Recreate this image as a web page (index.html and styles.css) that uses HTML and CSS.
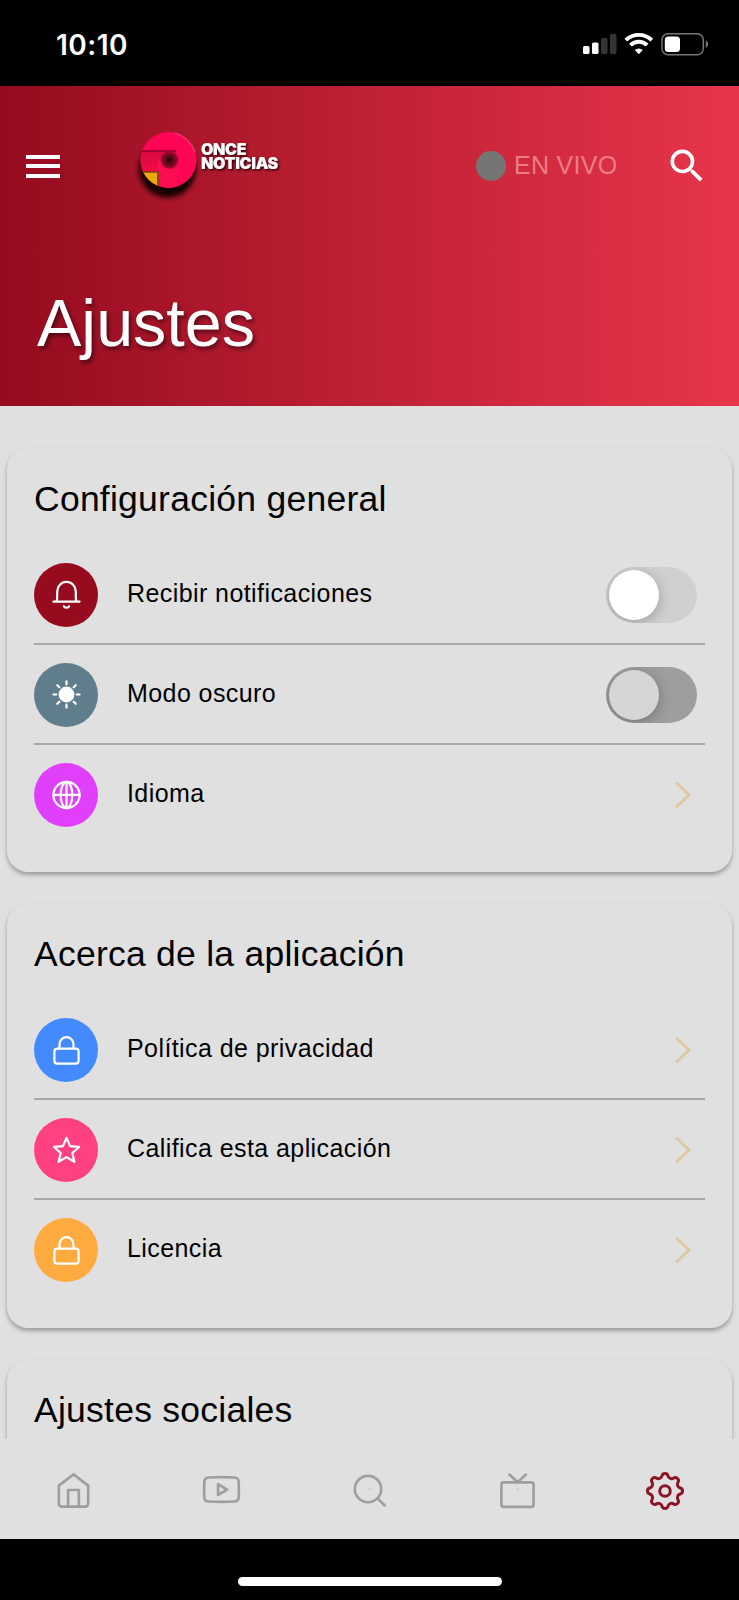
FILE: index.html
```html
<!DOCTYPE html>
<html lang="es">
<head>
  <meta charset="UTF-8" />
  <meta name="viewport" content="width=device-width, initial-scale=1.0"/>
  <title>Once Noticias - Ajustes</title>
  <link rel="stylesheet" href="styles.css">
</head>
<body>
  <!-- Barra de estado -->
  <div class="status-bar">
    <span class="time">10:10</span>
    <svg class="status-icons" width="128" height="24" viewBox="0 0 128 24">
      <g fill="#fff">
        <rect x="1" y="14" width="6.5" height="8" rx="1.5"/>
        <rect x="10" y="10.5" width="6.5" height="11.5" rx="1.5"/>
        <g fill="#343434">
          <rect x="19" y="6" width="6.5" height="16" rx="1.5"/>
          <rect x="28" y="2" width="6.5" height="20" rx="1.5"/>
        </g>
      </g>
      <g fill="none" stroke="#fff" stroke-width="3.9">
        <path d="M43.8 8.2a18.6 18.6 0 0 1 26 0"/>
        <path d="M48.5 13.1a12 12 0 0 1 16.6 0"/>
      </g>
      <path d="M56.8 22.2l-4-4.1a5.8 5.8 0 0 1 8 0z" fill="#fff"/>
      <rect x="80" y="1.7" width="41.3" height="21" rx="6" fill="none" stroke="#777" stroke-width="1.5"/>
      <rect x="82.800" y="4.500" width="15.2" height="15.5" rx="3.5" fill="#fff"/>
      <path d="M123.800 8.5c3 1.2 3 6 0 7.4z" fill="#777"/>
    </svg>
  </div>

  <!-- Encabezado -->
  <header class="header">
    <div class="topbar">
      <button class="icon-btn menu" aria-label="Menú"><span></span><span></span><span></span></button>
      <svg class="logo" width="160" height="90" viewBox="0 0 160 90">
        <defs>
          <filter id="soft" x="-30%" y="-30%" width="160%" height="160%"><feGaussianBlur stdDeviation="2.4"/></filter>
          <filter id="softText" x="-10%" y="-20%" width="120%" height="150%"><feDropShadow dx="1.5" dy="1.5" stdDeviation="0.8" flood-opacity="0.8"/></filter>
          <clipPath id="disc"><circle cx="38.500" cy="40" r="28"/></clipPath>
          <radialGradient id="hole">
            <stop offset="0" stop-color="#26040a"/>
            <stop offset="0.5" stop-color="#620a1c"/>
            <stop offset="1" stop-color="#b0062f"/>
          </radialGradient>
          <linearGradient id="wing" x1="0" y1="0" x2="0" y2="1">
            <stop offset="0" stop-color="#d8083f"/>
            <stop offset="0.5" stop-color="#f00b45"/>
            <stop offset="1" stop-color="#e60f48"/>
          </linearGradient>
        </defs>
        <circle cx="37.500" cy="49" r="28.500" fill="#100003" opacity="0.95" filter="url(#soft)"/>
        <g clip-path="url(#disc)">
          <rect x="10" y="12" width="58" height="56" fill="#ff0556"/>
          <path d="M10 31h36v9H29v30H10z" fill="url(#wing)"/>
          <path d="M10 31h36" stroke="#8c0028" stroke-width="1.6"/>
          <path d="M28 40v30h20V48z" fill="#fb0d50"/>
          <path d="M10 51h18v20H10z" fill="#e7ab0c"/>
          <path d="M10 51.800h18V70" fill="none" stroke="#8f3c10" stroke-width="1.8"/>
        </g>
        <path d="M45 13a28 28 0 0 1 20 19" fill="none" stroke="#ff6390" stroke-width="1" opacity="0.7"/>
        <circle cx="39.500" cy="40" r="9" fill="url(#hole)"/>
        <text class="logo-text" filter="url(#softText)"><tspan x="71" y="34.700">ONCE</tspan><tspan x="71" y="48.600">NOTICIAS</tspan></text>
      </svg>
      <div class="live"><span class="live-dot"></span>EN VIVO</div>
      <button class="icon-btn search" aria-label="Buscar">
        <svg width="44" height="44" viewBox="0 0 24 24" fill="#fff"><path d="M15.5 14h-.79l-.28-.27A6.471 6.471 0 0 0 16 9.5 6.5 6.5 0 1 0 9.5 16c1.61 0 3.09-.59 4.23-1.57l.27.28v.79l5 4.99L20.49 19l-4.99-5zm-6 0C7.01 14 5 11.99 5 9.5S7.01 5 9.5 5 14 7.01 14 9.5 11.99 14 9.5 14z"/></svg>
      </button>
    </div>
    <h1>Ajustes</h1>
  </header>

  <!-- Contenido -->
  <main class="content">
    <section class="card">
      <h2>Configuración general</h2>
      <div class="row">
        <span class="badge red">
          <svg viewBox="0 0 32 32"><path d="M2.500 23.300h27M5.800 22.800c.6-1.200.6-2.800.6-4.800V12.800a9.600 9.800 0 0 1 19.200 0V18c0 2 0 3.600.6 4.800M13.400 28.200c.6 1.800 4.600 1.800 5.200 0"/></svg>
        </span>
        <span class="label">Recibir notificaciones</span>
        <span class="toggle"></span>
      </div>
      <div class="row">
        <span class="badge slate">
          <svg viewBox="0 0 32 32"><circle cx="16" cy="16" r="7" fill="#fff"/><path d="M16 2.500v3M16 26.500v3M2.500 16h3M26.500 16h3M6.500 6.500l2.100 2.100M23.400 23.400l2.100 2.100M6.500 25.500l2.100-2.100M23.400 8.600l2.100-2.100"/></svg>
        </span>
        <span class="label">Modo oscuro</span>
        <span class="toggle dark"></span>
      </div>
      <div class="row">
        <span class="badge purple">
          <svg viewBox="0 0 32 32"><circle cx="16" cy="16.500" r="13.500"/><ellipse cx="16" cy="16.500" rx="6" ry="13.500"/><path d="M2.500 16.500h27M16 3v27"/></svg>
        </span>
        <span class="label">Idioma</span>
        <svg class="chevron" viewBox="0 0 18 28"><path d="M3 2.500L15 14 3 25.500"/></svg>
      </div>
    </section>

    <section class="card about">
      <h2>Acerca de la aplicación</h2>
      <div class="row">
        <span class="badge blue">
          <svg viewBox="0 0 32 32"><rect x="3.500" y="15.200" width="25" height="15.300" rx="3"/><path d="M8.800 15V10.500a7.200 7.200 0 0 1 14.400 0V15"/></svg>
        </span>
        <span class="label">Política de privacidad</span>
        <svg class="chevron" viewBox="0 0 18 28"><path d="M3 2.500L15 14 3 25.500"/></svg>
      </div>
      <div class="row">
        <span class="badge pink">
          <svg viewBox="0 0 32 32"><path d="M16 4l3.700 8.500 9.300.9-7 6.200 2.100 9.100L16 23.900l-8.100 4.800L10 19.600l-7-6.200 9.300-.9z"/></svg>
        </span>
        <span class="label">Califica esta aplicación</span>
        <svg class="chevron" viewBox="0 0 18 28"><path d="M3 2.500L15 14 3 25.500"/></svg>
      </div>
      <div class="row">
        <span class="badge orange">
          <svg viewBox="0 0 32 32"><rect x="3.500" y="15.200" width="25" height="15.300" rx="3"/><path d="M8.800 15V10.500a7.200 7.200 0 0 1 14.400 0V15"/></svg>
        </span>
        <span class="label">Licencia</span>
        <svg class="chevron" viewBox="0 0 18 28"><path d="M3 2.500L15 14 3 25.500"/></svg>
      </div>
    </section>

    <section class="card about">
      <h2>Ajustes sociales</h2>
    </section>
  </main>

  <!-- Navegación inferior -->
  <nav class="bottom-nav">
    <a><svg viewBox="0 0 44 44"><path d="M7 17L22 5.500 37 17V35.500a3 3 0 0 1-3 3H10a3 3 0 0 1-3-3zM16.500 38.500V21.500h11v17"/></svg></a>
    <a><svg viewBox="0 0 44 44"><path d="M9 8.700q13-.7 26 0 4.300.3 4.600 4.300.4 8 0 16-.3 4-4.600 4.300-13 .7-26 0-4.300-.3-4.600-4.300-.4-8 0-16Q4.700 9 9 8.700zM18.500 15.500v11l9.300-5.500z"/></svg></a>
    <a><svg viewBox="0 0 44 44"><circle cx="20.500" cy="20.500" r="13.500"/><path d="M30.300 30.300l7.200 6.800"/><circle class="dot" cx="22" cy="20.500" r="0.700"/></svg></a>
    <a><svg viewBox="0 0 44 44"><rect x="5.500" y="13.700" width="33" height="25" rx="2.500"/><path d="M13.800 5.800l8.400 7.600 8.200-7.600"/><circle class="dot" cx="22" cy="20.500" r="0.700"/></svg></a>
    <a class="active"><svg viewBox="0 0 44 44"><circle cx="22" cy="22" r="5.300"/><path d="M37.200 19A3.100 3.100 0 0 1 37.200 25A3.800 3.800 0 0 0 34.900 30.600A3.100 3.100 0 0 1 30.600 34.900A3.800 3.800 0 0 0 25 37.200A3.100 3.100 0 0 1 19 37.200A3.800 3.800 0 0 0 13.400 34.900A3.100 3.100 0 0 1 9.100 30.600A3.800 3.800 0 0 0 6.800 25A3.100 3.100 0 0 1 6.800 19A3.800 3.800 0 0 0 9.100 13.400A3.100 3.100 0 0 1 13.400 9.100A3.800 3.800 0 0 0 19 6.800A3.100 3.100 0 0 1 25 6.800A3.800 3.800 0 0 0 30.600 9.100A3.100 3.100 0 0 1 34.900 13.400A3.800 3.800 0 0 0 37.200 19z"/></svg></a>
  </nav>
  <div class="home-area"><span class="home-indicator"></span></div>
</body>
</html>
```
FILE: styles.css
```css
* {
  box-sizing: border-box;
}
body {
  margin: 0;
  height: 1600px;
  display: flex;
  flex-direction: column;
  overflow: hidden;
  font-family: "Liberation Sans", Arial, sans-serif;
  background: #e0e0e0;
  color: #000;
}

/* Barra de estado */
.status-bar {
  flex: none;
  height: 86px;
  padding: 3px 29px 0 56px;
  display: flex;
  align-items: center;
  justify-content: space-between;
  background: #000;
  color: #fff;
}
.status-icons {
  margin-bottom: 1px;
}
.time {
  font-family: Inter, sans-serif;
  font-size: 28px;
  font-weight: 600;
  letter-spacing: 0.5px;
}

/* Encabezado */
.header {
  flex: none;
  height: 320px;
  background: linear-gradient(90deg, #950b1f 0%, #bf2135 50%, #e8354b 100%);
  color: #fff;
}
.topbar {
  height: 158px;
  padding: 0 32px 0 26px;
  display: flex;
  align-items: center;
}
.icon-btn {
  padding: 0;
  border: none;
  background: none;
}
.menu {
  width: 34px;
  margin-top: 2px;
  display: flex;
  flex-direction: column;
  gap: 5.5px;
}
.menu span {
  height: 4px;
  background: #fff;
}
.logo {
  margin-left: 70px;
}
.logo-text {
  font-family: Inter, sans-serif;
  font-size: 16px;
  font-weight: 900;
  letter-spacing: -0.3px;
  fill: #fff;
}
.live {
  margin-left: 186px;
  display: flex;
  align-items: center;
  gap: 8px;
  font-size: 25px;
  letter-spacing: 0.3px;
  white-space: nowrap;
  color: #ee7c87;
}
.live-dot {
  width: 30px;
  height: 30px;
  margin-top: 1px;
  border-radius: 50%;
  background: #757575;
}
.search {
  margin-left: auto;
  margin-right: -2px;
  margin-top: 2px;
  height: 44px;
}
h1 {
  margin: 0;
  padding: 41px 0 0 37px;
  font-size: 66.5px;
  font-weight: normal;
  line-height: 76px;
  text-shadow: 2px 3px 4px rgba(0,0,0,0.5);
}

/* Tarjetas */
.content {
  flex: 1;
  min-height: 0;
  overflow: hidden;
  padding: 42px 7px 0;
}
.card {
  height: 424px;
  margin-bottom: 32px;
  padding: 0 27px;
  border-radius: 21px;
  background: #e0e0e0;
  box-shadow: 0 3px 4px rgba(0,0,0,0.3);
}
h2 {
  margin: 0;
  height: 97px;
  padding-top: 31px;
  font-size: 35.5px;
  font-weight: normal;
  line-height: 40px;
  letter-spacing: 0.25px;
}
.about h2 {
  height: 96px;
  padding-top: 30px;
}
.row {
  height: 100px;
  padding-top: 1px;
  display: flex;
  align-items: center;
  border-bottom: 2px solid #a8a8a8;
}
.row:last-child {
  border-bottom-color: transparent;
}
.badge {
  width: 64px;
  height: 64px;
  border-radius: 50%;
  display: flex;
  align-items: center;
  justify-content: center;
}
.badge svg {
  width: 31px;
  height: 31px;
  fill: none;
  stroke: #fff;
  stroke-width: 2.3;
  stroke-linecap: round;
  stroke-linejoin: round;
}
.red { background: #960b1e; }
.slate { background: #607d8b; }
.purple { background: #e040fb; }
.blue { background: #448aff; }
.pink { background: #ff4081; }
.orange { background: #ffab40; }
.label {
  flex: 1;
  margin: -2px 0 0 29px;
  font-size: 25px;
  letter-spacing: 0.42px;
}
.toggle {
  width: 91px;
  height: 56px;
  margin-right: 8px;
  padding: 3px;
  border-radius: 28px;
  overflow: hidden;
  background: #d0d0d1;
}
.toggle::before {
  content: "";
  display: block;
  width: 50px;
  height: 50px;
  border-radius: 50%;
  background: #fff;
  box-shadow: 0 3px 14px rgba(0,0,0,0.25);
}
.toggle.dark {
  background: #9e9e9e;
}
.toggle.dark::before {
  background: #d6d6d6;
}
.chevron {
  width: 18px;
  height: 28px;
  margin-right: 13px;
  fill: none;
  stroke: #dfc9a0;
  stroke-width: 3;
  stroke-linecap: round;
  stroke-linejoin: round;
}

/* Navegación inferior */
.bottom-nav {
  flex: none;
  height: 100px;
  padding-top: 3px;
  display: flex;
  align-items: center;
  background: #e0e0e0;
}
.bottom-nav a {
  flex: 1;
  display: flex;
  justify-content: center;
}
.bottom-nav svg {
  width: 43px;
  height: 43px;
  fill: none;
  stroke: #9e9e9e;
  stroke-width: 2.7;
  stroke-linecap: round;
  stroke-linejoin: round;
}
.bottom-nav .dot {
  fill: #a8a8a8;
  stroke: none;
}
.bottom-nav .active svg {
  width: 44px;
  height: 44px;
  stroke: #8c1425;
  stroke-width: 3;
}
.home-area {
  flex: none;
  height: 61px;
  padding-top: 38px;
  background: #000;
}
.home-indicator {
  display: block;
  width: 264px;
  height: 9px;
  margin: 0 auto;
  border-radius: 5px;
  background: #fff;
}
```
